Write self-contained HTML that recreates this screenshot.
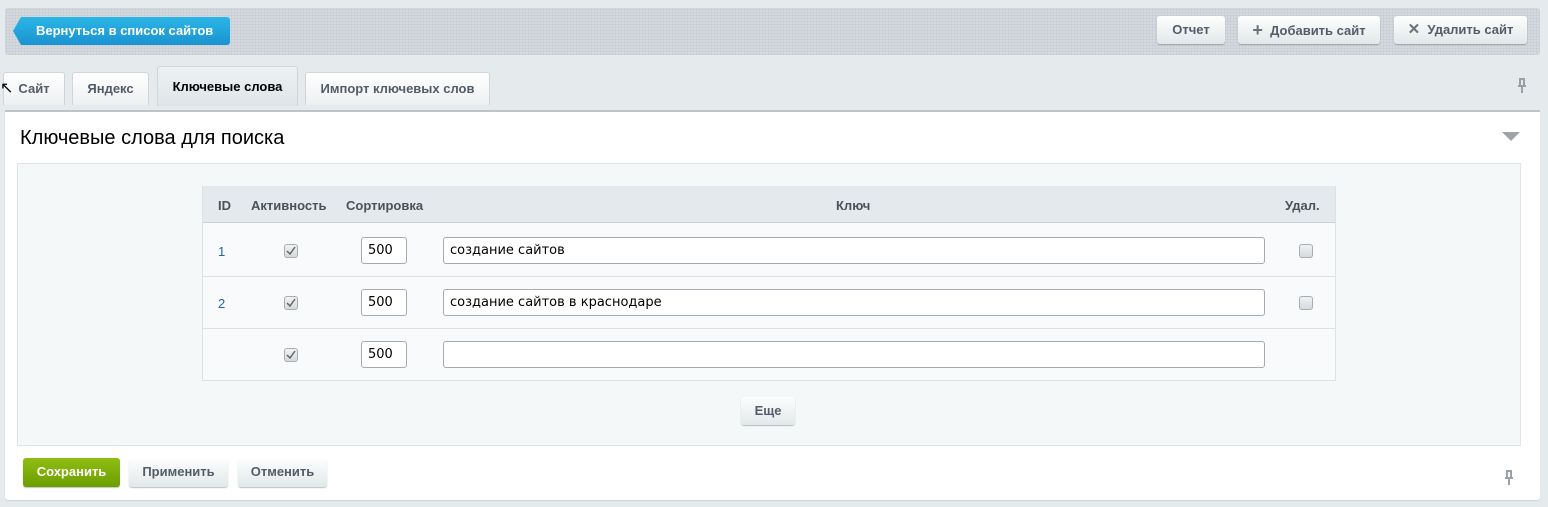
<!DOCTYPE html>
<html><head><meta charset="utf-8"><style>
*{box-sizing:border-box;margin:0;padding:0}
body{width:1548px;height:507px;background:#e5ebed;font-family:"Liberation Sans",Arial,sans-serif;position:relative;overflow:hidden}
.abs{position:absolute}
.toolbar{left:5px;top:8px;width:1535px;height:47px;background-color:#d3d9dd;background-image:radial-gradient(#c5ccd1 1px,transparent 1px);background-size:3px 3px;border-radius:3px}
.blue{left:13px;top:17px;width:217px;height:28px;background:linear-gradient(#2bb6e6,#1a93d1);color:#fff;font-weight:bold;font-size:13px;line-height:28px;padding-left:23px;border-radius:0 3px 3px 0;clip-path:polygon(8px 0,100% 0,100% 100%,8px 100%,0 50%)}
.btn{height:28px;background:linear-gradient(#fdfefe,#e2e8ea);border-radius:3px;box-shadow:0 1px 1px rgba(0,0,0,.25);font-weight:bold;font-size:13px;color:#535c69;line-height:28px;text-align:center}
.tab{top:72px;height:33px;background:linear-gradient(#fff,#edf0f1);border:1px solid #cfd5d8;border-bottom:none;border-radius:3px 3px 0 0;font-weight:bold;font-size:13px;color:#535c69;text-align:center;line-height:32px}
.panel{left:5px;top:110px;width:1535px;height:390px;background:#fff;border-top:2px solid #bcc4c8;border-radius:0 0 3px 3px;box-shadow:0 1px 1px rgba(0,0,0,.1)}
.inner{left:17px;top:163px;width:1504px;height:283px;background:#f5f8f9;border:1px solid #dfe5e7}
.tbl{left:202px;top:186px;width:1134px;height:195px;border:1px solid #dbe1e4;background:#f8fafb}
.th{top:186px;height:37px;background:#e3e9ec;border-bottom:1px solid #c9d1d5}
.hd{font-weight:bold;font-size:13px;color:#4a525a;top:198px}
.row{left:203px;width:1132px;height:1px;background:#dbe1e4}
.cb{width:14px;height:14px;border:1px solid #a6aeb3;border-radius:3px;background:linear-gradient(#f0f2f3,#d6dadd)}
.inp{height:27px;border:1px solid #a5abb0;border-radius:3px;background:#fff;font-family:"DejaVu Sans",sans-serif;font-size:13px;line-height:25px;padding-left:6px;color:#000}
</style></head><body>
<div class="abs toolbar"></div>
<div class="abs blue">Вернуться в список сайтов</div>
<div class="abs btn" style="left:1157px;top:16px;width:68px">Отчет</div>
<div class="abs btn" style="left:1238px;top:16px;width:142px"><span style="font-size:18px;color:#6b737a;vertical-align:-1px">+</span>&nbsp; Добавить сайт</div>
<div class="abs btn" style="left:1394px;top:16px;width:133px"><span style="font-size:15px;color:#6b737a">✕</span>&nbsp; Удалить сайт</div>

<div class="abs tab" style="left:3px;width:62px">Сайт</div>
<div class="abs tab" style="left:72px;width:77px">Яндекс</div>
<div class="abs tab" style="left:157px;top:66px;height:40px;width:141px;background:linear-gradient(#edf1f2,#dfe5e8);color:#000;line-height:40px">Ключевые слова</div>
<div class="abs tab" style="left:305px;width:185px">Импорт ключевых слов</div>
<svg class="abs" style="left:1516px;top:78px" width="12" height="16"><path d="M3 1h6M4 1v6M8 1v6M2 8h8M6 8v7" stroke="#98a1a6" stroke-width="2" fill="none"/></svg>
<div class="abs" style="left:0;top:78px;font-size:16px">&#8598;</div>

<div class="abs panel"></div>
<div class="abs" style="left:20px;top:127px;font-size:20px;color:#000">Ключевые слова для поиска</div>
<svg class="abs" style="left:1502px;top:132px" width="18" height="10"><path d="M0 0h18L9 9z" fill="#9da5aa"/></svg>
<div class="abs inner"></div>
<div class="abs tbl"></div>
<div class="abs th" style="left:203px;width:1132px"></div>
<div class="abs hd" style="left:218px">ID</div>
<div class="abs hd" style="left:251px">Активность</div>
<div class="abs hd" style="left:346px">Сортировка</div>
<div class="abs hd" style="left:836px">Ключ</div>
<div class="abs hd" style="left:1285px">Удал.</div>
<div class="abs row" style="top:276px"></div>
<div class="abs row" style="top:328px"></div>

<div class="abs" style="left:218px;top:244px;font-size:13px;color:#2067b0">1</div>
<div class="abs" style="left:218px;top:296px;font-size:13px;color:#2067b0">2</div>
<div class="abs cb" style="left:284px;top:244px"></div>
<div class="abs cb" style="left:284px;top:296px"></div>
<div class="abs cb" style="left:284px;top:348px"></div>
<svg class="abs" style="left:285px;top:245px" width="12" height="12"><path d="M2 6l3 3 5-7" stroke="#666" stroke-width="1.5" fill="none"/></svg>
<svg class="abs" style="left:285px;top:297px" width="12" height="12"><path d="M2 6l3 3 5-7" stroke="#666" stroke-width="1.5" fill="none"/></svg>
<svg class="abs" style="left:285px;top:349px" width="12" height="12"><path d="M2 6l3 3 5-7" stroke="#666" stroke-width="1.5" fill="none"/></svg>
<div class="abs inp" style="left:361px;top:237px;width:46px">500</div>
<div class="abs inp" style="left:361px;top:289px;width:46px">500</div>
<div class="abs inp" style="left:361px;top:341px;width:46px">500</div>
<div class="abs inp" style="left:443px;top:237px;width:822px">создание сайтов</div>
<div class="abs inp" style="left:443px;top:289px;width:822px">создание сайтов в краснодаре</div>
<div class="abs inp" style="left:443px;top:341px;width:822px"></div>
<div class="abs cb" style="left:1299px;top:244px"></div>
<div class="abs cb" style="left:1299px;top:296px"></div>

<div class="abs btn" style="left:741px;top:397px;width:54px">Еще</div>
<div class="abs btn" style="left:23px;top:458px;width:97px;height:29px;background:linear-gradient(#8fbd12,#6b9e00);color:#fff">Сохранить</div>
<div class="abs btn" style="left:129px;top:458px;width:99px;height:29px">Применить</div>
<div class="abs btn" style="left:238px;top:458px;width:89px;height:29px">Отменить</div>
<svg class="abs" style="left:1503px;top:470px" width="12" height="16"><path d="M3 1h6M4 1v6M8 1v6M2 8h8M6 8v7" stroke="#98a1a6" stroke-width="2" fill="none"/></svg>
</body></html>
